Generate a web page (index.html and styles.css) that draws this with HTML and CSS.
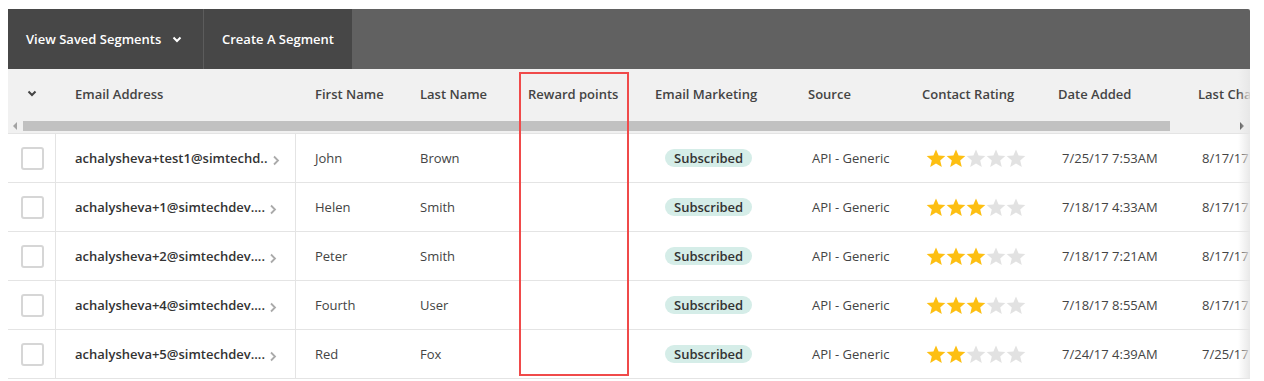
FILE: index.html
```html
<!DOCTYPE html>
<html lang="en">
<head>
    <meta charset="UTF-8">
    <meta name="viewport" content="width=device-width, initial-scale=1.0">
    <title>Contacts</title>
    <link rel="stylesheet" href="styles.css">
</head>
<body>

<div class="page">
    <div class="panel">
        <!-- ===== TOOLBAR ===== -->
        <div class="toolbar">
            <button class="tool-btn">View Saved Segments
                <svg class="tool-caret" width="10" height="7" viewBox="0 0 10 7"><polyline points="1.5,1.5 5,5 8.5,1.5" fill="none" stroke="#fff" stroke-width="2"/></svg>
            </button>
            <button class="tool-btn">Create A Segment</button>
        </div>

        <!-- ===== TABLE HEAD ===== -->
        <div class="grid head">
            <div class="cell check-cell">
                <svg width="10" height="7" viewBox="0 0 10 7"><polyline points="1.5,1.5 5,5 8.5,1.5" fill="none" stroke="#444" stroke-width="2"/></svg>
            </div>
            <div class="cell">Email Address</div>
            <div class="cell">First Name</div>
            <div class="cell">Last Name</div>
            <div class="cell">Reward points</div>
            <div class="cell">Email Marketing</div>
            <div class="cell">Source</div>
            <div class="cell">Contact Rating</div>
            <div class="cell">Date Added</div>
            <div class="cell">Last Changed</div>
        </div>

        <!-- ===== SCROLLBAR ===== -->
        <div class="scrollbar">
            <span class="arrow arrow-left"></span>
            <span class="track"></span>
            <span class="arrow arrow-right"></span>
        </div>

        <!-- ===== ROWS ===== -->
        <div id="rows"></div>

        <div class="edge-fade"></div>
        <div class="highlight"></div>
    </div>
</div>

<script>
    const contacts = [
        { email: 'achalysheva+test1@simtechd..', first: 'John', last: 'Brown', rating: 2, added: '7/25/17 7:53AM', changed: '8/17/17' },
        { email: 'achalysheva+1@simtechdev....', first: 'Helen', last: 'Smith', rating: 3, added: '7/18/17 4:33AM', changed: '8/17/17' },
        { email: 'achalysheva+2@simtechdev....', first: 'Peter', last: 'Smith', rating: 3, added: '7/18/17 7:21AM', changed: '8/17/17' },
        { email: 'achalysheva+4@simtechdev....', first: 'Fourth', last: 'User', rating: 3, added: '7/18/17 8:55AM', changed: '8/17/17' },
        { email: 'achalysheva+5@simtechdev....', first: 'Red', last: 'Fox', rating: 2, added: '7/24/17 4:39AM', changed: '7/25/17' }
    ];

    const STAR = '<svg width="20" height="19" viewBox="0 0 20 19"><polygon points="10,0.5 12.6,6.6 19.3,7.1 14.2,11.4 15.8,18 10,14.5 4.2,18 5.8,11.4 0.7,7.1 7.4,6.6"/></svg>';

    function renderRows() {
        const rows = document.getElementById('rows');
        contacts.forEach(c => {
            let stars = '';
            for (let i = 0; i < 5; i++) {
                stars += `<span class="star ${i < c.rating ? 'on' : ''}">${STAR}</span>`;
            }
            const row = document.createElement('div');
            row.className = 'grid row';
            row.innerHTML = `
                <div class="cell check-cell line"><span class="box"></span></div>
                <div class="cell email line">${c.email}
                    <svg class="more" width="8" height="11" viewBox="0 0 8 11"><polyline points="2,1.5 6,5.5 2,9.5" fill="none" stroke="#aaa" stroke-width="1.8"/></svg>
                </div>
                <div class="cell">${c.first}</div>
                <div class="cell">${c.last}</div>
                <div class="cell"></div>
                <div class="cell marketing"><span class="badge">Subscribed</span></div>
                <div class="cell shift">API - Generic</div>
                <div class="cell shift stars">${stars}</div>
                <div class="cell shift">${c.added}</div>
                <div class="cell shift">${c.changed}</div>`;
            rows.appendChild(row);
        });
    }

    renderRows();
</script>

</body>
</html>
```

FILE: styles.css
```css
:root {
    --text: #444;
    --border: #e4e4e4;
    --bar: #616161;
    --bar-dark: #474747;
    --font-family: "Open Sans", "Noto Sans", Arial, sans-serif;
}
body {
    margin: 0;
    font-family: var(--font-family);
    font-size: 13px;
    color: var(--text);
    background: #fff;
}
.page {
    padding: 9px 0 0 8px;
}
.panel {
    position: relative;
    width: 1242px;
    overflow: hidden;
}
.toolbar {
    display: flex;
    height: 60px;
    background: var(--bar);
    border-radius: 2px 2px 0 0;
}
.tool-btn {
    display: flex;
    align-items: center;
    gap: 11px;
    padding: 0 18px;
    border: none;
    background: var(--bar-dark);
    color: #fff;
    font-family: var(--font-family);
    font-size: 13px;
    font-weight: 600;
}
.tool-btn:first-child {
    width: 196px;
    padding-left: 18px;
    border-right: 1px solid #5c5c5c;
}
.tool-btn:last-child {
    width: 148px;
    justify-content: center;
    padding: 0;
}
.grid {
    display: grid;
    grid-template-columns: 48px 240px 105px 108px 127px 153px 114px 136px 140px 71px;
}
.cell {
    display: flex;
    align-items: center;
    padding-left: 19px;
    white-space: nowrap;
    overflow: hidden;
}
.head {
    height: 49px;
    background: #f1f1f1;
    font-weight: 600;
}
.check-cell {
    justify-content: center;
    padding-left: 0;
}
.scrollbar {
    display: flex;
    align-items: center;
    height: 14px;
    background: #f1f1f1;
    border-bottom: 1px solid var(--border);
    padding-top: 1px;
}
.arrow {
    width: 0;
    height: 0;
    border-top: 4px solid transparent;
    border-bottom: 4px solid transparent;
}
.arrow-left {
    margin: 0 6px 0 5px;
    border-right: 4px solid #a3a3a3;
}
.arrow-right {
    margin-left: 70px;
    border-left: 4px solid #505050;
}
.track {
    width: 1147px;
    height: 10px;
    background: #c1c1c1;
}
.row {
    height: 48px;
    border-bottom: 1px solid var(--border);
    border-left: 1px solid var(--border);
    margin-left: -1px;
}
.line {
    border-right: 1px solid var(--border);
}
.box {
    width: 19px;
    height: 19px;
    border: 2px solid #d6d6d6;
    border-radius: 3px;
    margin-left: 1px;
}
.email {
    font-weight: 600;
    color: #333;
}
.more {
    margin: 5px 0 0 4px;
}
.marketing {
    padding-left: 29px;
}
.shift {
    padding-left: 23px;
}
.badge {
    background: #d5ede8;
    color: #333;
    font-weight: 600;
    padding: 0 9px;
    line-height: 18px;
    border-radius: 9px;
}
.star svg {
    display: block;
    fill: #e2e2e2;
}
.star.on svg {
    fill: #fdbf12;
}
.edge-fade {
    position: absolute;
    top: 60px;
    right: 0;
    bottom: 0;
    width: 12px;
    background: linear-gradient(to right, rgba(255,255,255,0), rgba(230,230,230,0.9));
}
.highlight {
    position: absolute;
    left: 511px;
    top: 63px;
    width: 106px;
    height: 300px;
    border: 2px solid #f04a4a;
}
```
